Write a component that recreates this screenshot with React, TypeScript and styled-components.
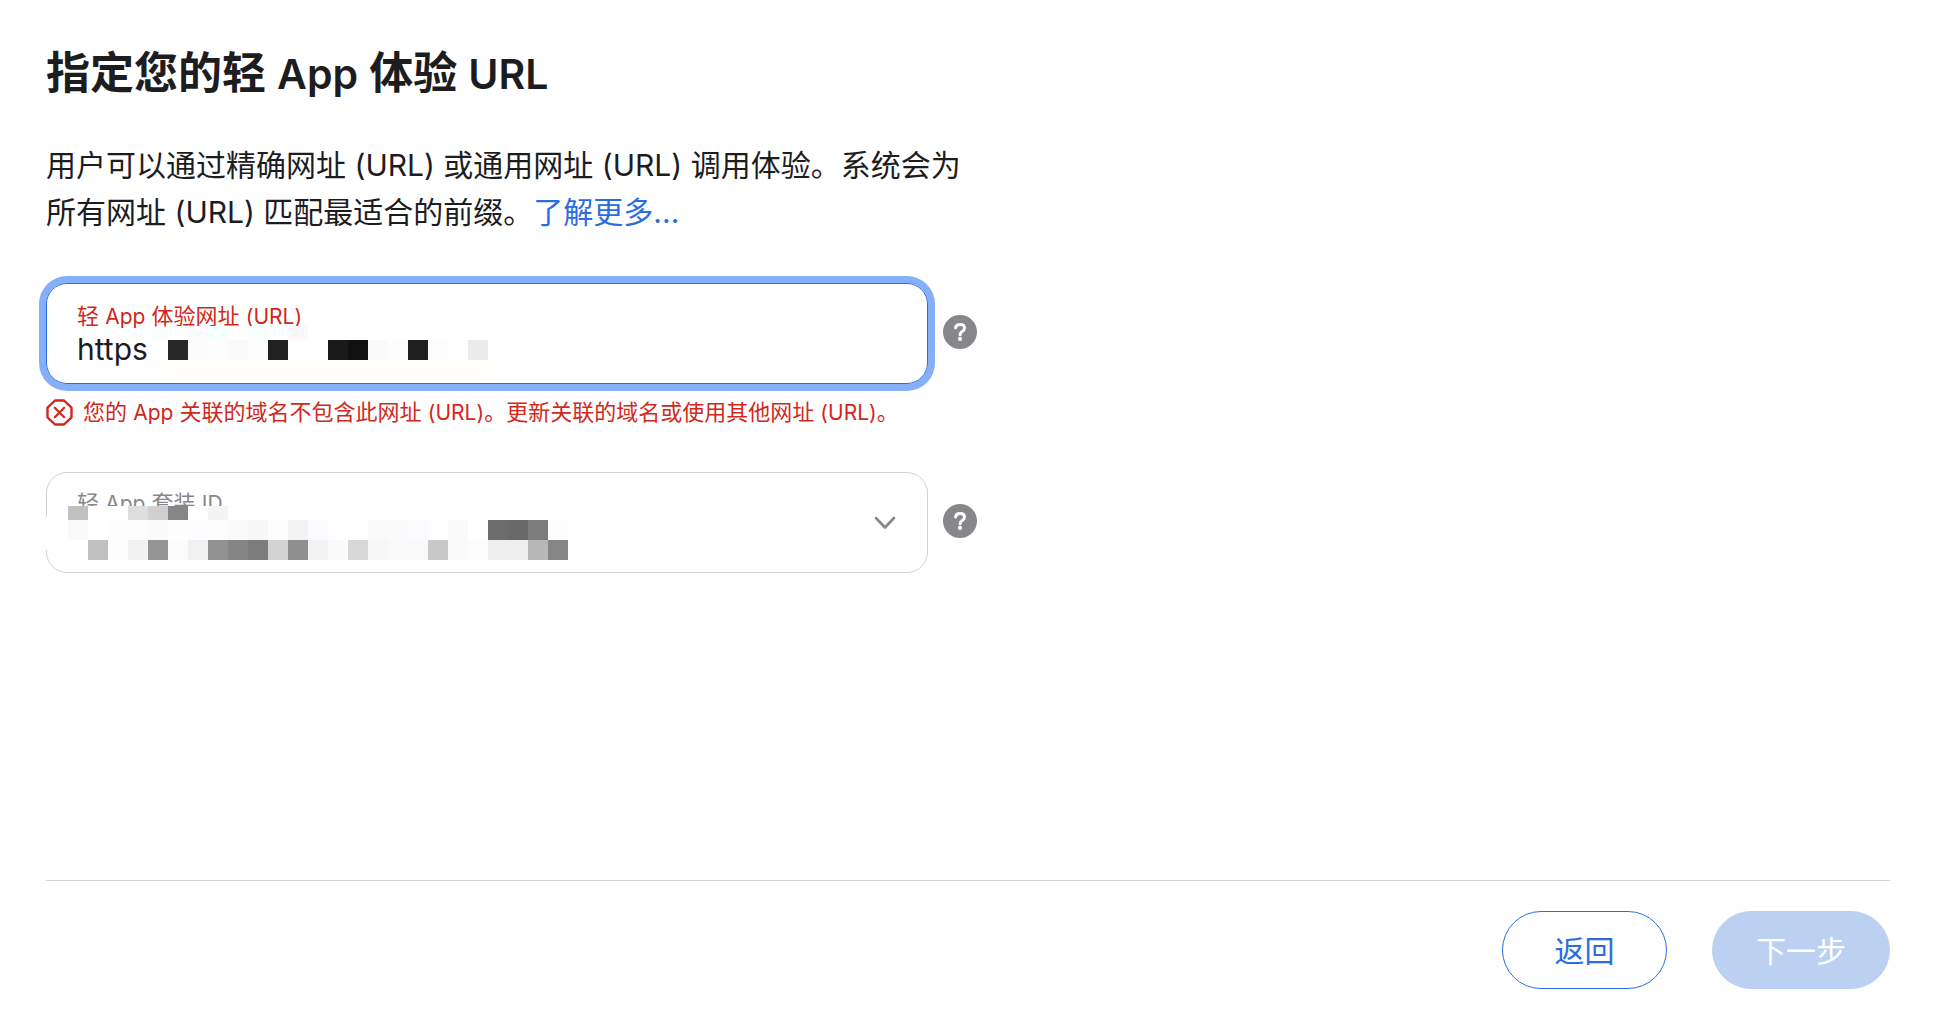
import React, { useState } from "react";
import styled, { createGlobalStyle, css } from "styled-components";

const GlobalStyle = createGlobalStyle`
  *, *::before, *::after { box-sizing: border-box; }
  body {
    margin: 0;
    background: #fff;
    color: #1d1d1f;
    font-family: Inter, "Noto Sans CJK SC", sans-serif;
    font-size: 30px;
  }
  button, input, select { font: inherit; color: inherit; }
`;

const Page = styled.div`
  display: flex;
  flex-direction: column;
  min-height: 100vh;
  padding: 48px 64px 23px 46px;
`;

const Title = styled.h1`
  margin: 0;
  font-size: 44px;
  line-height: 50px;
  font-weight: 600;
`;

/* Latin words are set slightly smaller than the Chinese text around them. */
const Latin = styled.span<{ $size: number }>`
  font-size: ${(p) => p.$size}px;
  line-height: 1;
`;

const Intro = styled.p`
  max-width: 940px;
  margin: 44px 0 0;
  font-size: 30px;
  line-height: 47px;
`;

const Link = styled.a`
  color: #2b6de0;
  text-decoration: none;
`;

const Form = styled.form`
  display: flex;
  flex-direction: column;
  margin-top: 47px;
`;

const FieldRow = styled.div`
  display: flex;
  align-items: center;
  gap: 15px;
`;

const FieldBox = styled.div<{ $focused?: boolean }>`
  position: relative;
  display: flex;
  flex: 0 1 882px;
  flex-direction: column;
  height: 101px;
  padding: ${(p) => (p.$focused ? 18 : 16)}px 30px 0;
  border: 1px solid #d2d2d7;
  border-radius: 21px;
  ${(p) =>
    p.$focused &&
    css`
      border-color: #2b6de0;
      box-shadow: 0 0 0 7px #86affa;
    `}
`;

const FieldLabel = styled.label<{ $error?: boolean }>`
  font-size: 22px;
  line-height: 28px;
  color: ${(p) => (p.$error ? "#d1281c" : "#86868b")};
`;

const fieldControl = css`
  width: 100%;
  height: 38px;
  padding: 0;
  border: 0;
  outline: 0;
  background: transparent;
  font-size: 30px;
`;

const TextInput = styled.input`
  ${fieldControl}
`;

const Select = styled.select`
  ${fieldControl}
  appearance: none;
`;

const Chevron = styled.svg`
  position: absolute;
  right: 31px;
  top: 43px;
  width: 22px;
  height: 14px;
  pointer-events: none;
`;

const HelpButton = styled.button`
  flex: none;
  width: 34px;
  height: 34px;
  margin-bottom: 4px;
  padding: 0;
  border: 0;
  border-radius: 50%;
  background: #86868b;
  svg { display: block; }
`;

const ErrorMessage = styled.p`
  display: flex;
  align-items: center;
  gap: 10px;
  margin: 14px 0 46px;
  font-size: 22px;
  line-height: 28px;
  color: #d1281c;
  svg { flex: none; }
`;

const Footer = styled.footer`
  display: flex;
  justify-content: flex-end;
  gap: 45px;
  margin-top: auto;
  padding-top: 30px;
  border-top: 1px solid #d2d2d7;
`;

const PillButton = styled.button<{ $primary?: boolean }>`
  min-width: 165px;
  height: 78px;
  padding: 0 43px 2px;
  border: 1px solid #2b6de0;
  border-radius: 39px;
  background: ${(p) => (p.$primary ? "#2b6de0" : "#fff")};
  color: ${(p) => (p.$primary ? "#fff" : "#2b6de0")};
  font-size: 30px;
  &:disabled { border-color: #bcd0f2; background: #bcd0f2; }
`;

/* Pixelated cover that hides private values inside a field. */
const Mosaic = styled.div<{ $left: number; $top: number; $plate?: boolean }>`
  position: absolute;
  left: ${(p) => p.$left}px;
  top: ${(p) => p.$top}px;
  background: ${(p) => (p.$plate ? "#fff" : "transparent")};
  border-radius: ${(p) => (p.$plate ? "0" : "26px")};
  overflow: hidden;
  pointer-events: none;
`;

const MosaicRow = styled.div<{ $height: number }>`
  display: flex;
  height: ${(p) => p.$height}px;
`;

const Tile = styled.span<{ $color: string }>`
  flex: none;
  width: 20px;
  background: ${(p) => p.$color};
`;

const BorderGap = styled.span`
  position: absolute;
  left: -1px;
  top: 44px;
  width: 2px;
  height: 33px;
  background: #fff;
`;

type TileRow = { height: number; colors: string };

const urlTiles: TileRow[] = [
  { height: 14, colors: "f9fffa fff fffafe f6ffff fffefa f6feff fff fff7fa fff fff fff fff fff fff fff fff fff fff" },
  { height: 20, colors: "fff 282828 fbfbfb fcfcfc f9f9f9 fdfdfd 212121 fff fff 1a1a1a 111 fafafa fdfdfd 202020 fcfcfc fff ebebeb fff" },
  { height: 20, colors: "fffefa fffefa fffefa fffefa fffefa fffefa fffefa fffefa fffefa fffefa fffefa fffefa fffefa fffefa fffefa fffefa fffefa fffefa" },
];

const bundleTiles: TileRow[] = [
  { height: 14, colors: "c0c0c0 fff fff dedee0 d0d0d1 868688 fff f4f4f4" },
  { height: 20, colors: "f9f9f9 fff fdfdfd fcfcfc fafafa fdfdfd fcfcff fdfdfd fafafa f7f7f7 fcfcfc f3f3f3 fafbff fefefe fff f9f9f9 fafafa fbfbff fff fafafa fff 6c6c6c 696969 7c7c7c fcfcff" },
  { height: 20, colors: "fff c0c0c0 fdfdfd f2f2f2 959595 fbfbfb f0f0f0 929292 858585 7c7c7c d3d3d3 8f8f8f f3f3f3 fafafa d7d7d7 f6f6f6 f9f9f9 f9f9f9 c8c8c8 fafafa fcfcfc ededed ededed b8b8b8 868686" },
];

function Tiles({ rows }: { rows: TileRow[] }) {
  return (
    <>
      {rows.map((row, r) => (
        <MosaicRow key={r} $height={row.height}>
          {row.colors.split(" ").map((c, i) => (
            <Tile key={i} $color={`#${c}`} />
          ))}
        </MosaicRow>
      ))}
    </>
  );
}

function Help() {
  return (
    <HelpButton type="button" aria-label="帮助">
      <svg width="34" height="34" viewBox="0 0 34 34" fill="none">
        <path
          d="M12.6 12.9C12.8 10.6 14.6 9.4 17.1 9.4C19.7 9.4 21.5 10.8 21.5 13C21.5 14.8 20.5 15.7 19.1 16.6C17.7 17.5 17.1 18.2 17.1 19.7"
          stroke="#fff"
          strokeWidth="3"
          strokeLinecap="round"
        />
        <circle cx="17" cy="23.9" r="2.1" fill="#fff" />
      </svg>
    </HelpButton>
  );
}

export default function App() {
  const [url, setUrl] = useState("https");
  return (
    <Page lang="zh-CN">
      <GlobalStyle />
      <Title>
        指定您的轻 <Latin $size={41}>App</Latin> 体验 <Latin $size={41}>URL</Latin>
      </Title>
      <Intro>
        用户可以通过精确网址 (URL) 或通用网址 (URL) 调用体验。系统会为所有网址 (URL) 匹配最适合的前缀。
        <Link href="#more">了解更多...</Link>
      </Intro>
      <Form>
        <FieldRow>
          <FieldBox $focused>
            <FieldLabel htmlFor="url" $error>
              轻 <Latin $size={21}>App</Latin> 体验网址 <Latin $size={21}>(URL)</Latin>
            </FieldLabel>
            <TextInput
              id="url"
              value={url}
              onChange={(e) => setUrl(e.target.value)}
              aria-invalid="true"
              aria-describedby="url-error"
            />
            <Mosaic $left={101} $top={42}>
              <Tiles rows={urlTiles} />
            </Mosaic>
          </FieldBox>
          <Help />
        </FieldRow>
        <ErrorMessage id="url-error">
          <svg width="27" height="27" viewBox="0 0 27 27" fill="none" stroke="#d1281c" strokeLinecap="round" strokeLinejoin="round">
            <path d="M9 1.5H18L25.5 8.7V18.3L18 25.5H9L1.5 18.3V8.7Z" strokeWidth="2.4" />
            <path d="M8.8 8.8L18.2 18.2M18.2 8.8L8.8 18.2" strokeWidth="2.2" />
          </svg>
          <span>
            您的 <Latin $size={21}>App</Latin> 关联的域名不包含此网址 <Latin $size={21}>(URL)</Latin>。更新关联的域名或使用其他网址 <Latin $size={21}>(URL)</Latin>。
          </span>
        </ErrorMessage>
        <FieldRow>
          <FieldBox>
            <FieldLabel htmlFor="bundle">
              轻 <Latin $size={21}>App</Latin> 套装 <Latin $size={21}>ID</Latin>
            </FieldLabel>
            <Select id="bundle" defaultValue="">
              <option value="" />
            </Select>
            <Mosaic $left={21} $top={33} $plate>
              <Tiles rows={bundleTiles} />
            </Mosaic>
            <BorderGap />
            <Chevron viewBox="0 0 22 14" fill="none">
              <path d="M2 2L11 11.5L20 2" stroke="#86868b" strokeWidth="2.6" strokeLinecap="round" strokeLinejoin="round" />
            </Chevron>
          </FieldBox>
          <Help />
        </FieldRow>
      </Form>
      <Footer>
        <PillButton type="button">返回</PillButton>
        <PillButton type="button" $primary disabled>下一步</PillButton>
      </Footer>
    </Page>
  );
}
